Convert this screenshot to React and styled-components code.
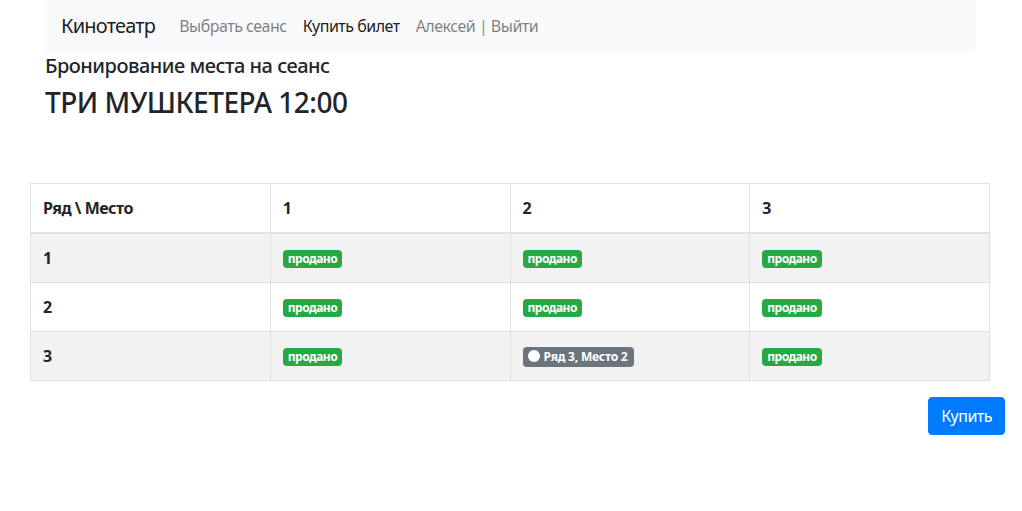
import React from 'react';
import styled, { createGlobalStyle } from 'styled-components';

const GlobalStyle = createGlobalStyle`
  body {
    margin: 0;
    font-family: "Noto Sans", "Open Sans", sans-serif;
    font-size: 16px;
    line-height: 1.5;
    letter-spacing: -0.5px;
    color: #212529;
    background: #fff;
  }
`;

const seats = [
  [
    { sold: true },
    { sold: true },
    { sold: true },
  ],
  [
    { sold: true },
    { sold: true },
    { sold: true },
  ],
  [
    { sold: true },
    { sold: false },
    { sold: true },
  ],
];

const App = () => {
  return (
    <Page>
      <GlobalStyle />
      <Container>
        <Navbar>
          <Brand>Кинотеатр</Brand>
          <NavLink>Выбрать сеанс</NavLink>
          <NavLink active>Купить билет</NavLink>
          <NavLink>Алексей | Выйти</NavLink>
        </Navbar>
        <Subtitle>Бронирование места на сеанс</Subtitle>
        <Title>ТРИ МУШКЕТЕРА 12:00</Title>
      </Container>

      <Table>
        <thead>
          <tr>
            <Th>Ряд \ Место</Th>
            <Th>1</Th>
            <Th>2</Th>
            <Th>3</Th>
          </tr>
        </thead>
        <tbody>
          {seats.map((row, r) => (
            <Row key={r} striped={r % 2 === 0}>
              <RowHead>{r + 1}</RowHead>
              {row.map((seat, p) => (
                <Td key={p}>
                  {seat.sold ? (
                    <Badge>продано</Badge>
                  ) : (
                    <Badge free>
                      <Radio />
                      Ряд {r + 1}, Место {p + 1}
                    </Badge>
                  )}
                </Td>
              ))}
            </Row>
          ))}
        </tbody>
      </Table>

      <Actions>
        <Button>Купить</Button>
      </Actions>
    </Page>
  );
};

const Page = styled.div`
  padding-bottom: 40px;
`;

const Container = styled.div`
  width: 930px;
  margin-left: 45px;
`;

const Navbar = styled.nav`
  display: flex;
  align-items: center;
  height: 52px;
  padding: 0 16px;
  background: #f8f9fa;
`;

const Brand = styled.span`
  font-size: 20px;
  letter-spacing: -0.8px;
  color: rgba(0, 0, 0, 0.9);
  margin-right: 16px;
  line-height: 30px;
`;

const NavLink = styled.span`
  font-size: 16px;
  padding: 0 8px;
  color: ${(p) => (p.active ? 'rgba(0, 0, 0, 0.9)' : 'rgba(0, 0, 0, 0.5)')};
`;

const Subtitle = styled.h5`
  font-size: 20px;
  font-weight: 500;
  line-height: 1.2;
  margin: 2px 0 8px;
`;

const Title = styled.h3`
  font-size: 28px;
  font-weight: 500;
  line-height: 1.2;
  margin: 0;
`;

const Table = styled.table`
  width: 960px;
  margin: 63px 0 16px 30px;
  border-collapse: collapse;
  table-layout: fixed;
`;

const Th = styled.th`
  text-align: left;
  font-weight: 700;
  padding: 12px;
  height: 24px;
  border: 1px solid #dee2e6;
  border-bottom: 2px solid #dee2e6;
`;

const Row = styled.tr`
  background: ${(p) => (p.striped ? '#f2f2f2' : '#fff')};
`;

const RowHead = styled.th`
  text-align: left;
  font-weight: 700;
  padding: 12px;
  height: 24px;
  border: 1px solid #dee2e6;
`;

const Td = styled.td`
  padding: 12px;
  height: 24px;
  border: 1px solid #dee2e6;
`;

const Badge = styled.span`
  display: inline-flex;
  align-items: center;
  gap: 4px;
  font-size: 12px;
  font-weight: 700;
  letter-spacing: ${(p) => (p.free ? '-0.2px' : '-0.5px')};
  line-height: 1;
  padding: ${(p) => (p.free ? '4px 6px 4px 5px' : '3px 5px')};
  border-radius: 4px;
  color: #fff;
  background: ${(p) => (p.free ? '#6c757d' : '#28a745')};
  vertical-align: middle;
`;

const Radio = styled.span`
  display: inline-block;
  width: 12px;
  height: 12px;
  margin-top: -2px;
  border-radius: 50%;
  background: #fff;
`;

const Actions = styled.div`
  display: flex;
  justify-content: flex-end;
  padding-right: 17px;
`;

const Button = styled.button`
  font-family: inherit;
  font-size: 16px;
  letter-spacing: -0.5px;
  line-height: 24px;
  padding: 6px 12px;
  border: 1px solid #007bff;
  border-radius: 4px;
  background: #007bff;
  color: #fff;
`;

export default App;
